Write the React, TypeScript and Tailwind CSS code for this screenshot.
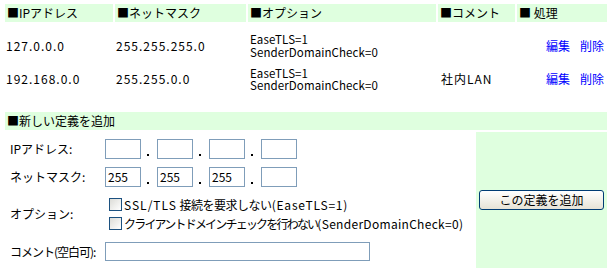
import React from "react";

const IpInputs = ({ values }: { values: string[] }) => (
  <div className="flex items-stretch h-[20px]">
    {values.map((v, i) => (
      <React.Fragment key={i}>
        <div className="w-[36px] h-[20px] border border-[#7f9db9] bg-white flex items-center pl-[2px] text-[12px] leading-none">
          {v}
        </div>
        {i < 3 && (
          <div className="w-[16px] flex items-end pb-[3px]">
            <div className="ml-[6px] w-[2px] h-[2px] bg-black" />
          </div>
        )}
      </React.Fragment>
    ))}
  </div>
);

const Check = ({ children }: { children: React.ReactNode }) => (
  <div className="h-[19px] flex items-center whitespace-nowrap">
    <div className="ml-[4px] shrink-0 w-[13px] h-[13px] border border-[#1c5180] bg-gradient-to-br from-[#dcdcd7] to-white" />
    <span className="ml-[2px] text-[12px] leading-none">{children}</span>
  </div>
);

export default function App() {
  const green = "bg-[#dfffdf]";
  const cols = "grid grid-cols-[108px_131px_188px_77px_90px] gap-x-[2px]";
  return (
    <div
      className="w-[612px] h-[273px] bg-white overflow-hidden text-black"
      style={{ fontFamily: '"Noto Sans CJK JP", "Noto Sans", sans-serif' }}
    >
      <div className="pl-[5px] pt-[4px]">
        <div className={`${cols} h-[18px] text-[12px] leading-none`}>
          {["■IPアドレス", "■ネットマスク", "■オプション", "■コメント", "■ 処理"].map((h) => (
            <div key={h} className={`${green} flex items-center pl-[2px] whitespace-nowrap`}>
              {h}
            </div>
          ))}
        </div>
        {[
          { ip: "127.0.0.0", mask: "255.255.255.0", c: "", h: "h-[33px] mt-[7px]" },
          { ip: "192.168.0.0", mask: "255.255.0.0", c: "社内LAN", h: "h-[34px]" },
        ].map((r) => (
          <div key={r.ip} className={`${cols} ${r.h} text-[12px] leading-none`}>
            <div className="flex items-center pl-[1px] tracking-[1px]">{r.ip}</div>
            <div className="flex items-center pl-[1px] tracking-[1px]">{r.mask}</div>
            <div className="flex flex-col justify-center pl-[2px] text-[11.5px] leading-[12.5px] tracking-[0.1px] whitespace-nowrap">
              <div>EaseTLS=1</div>
              <div>SenderDomainCheck=0</div>
            </div>
            <div className="flex items-center pl-[3px] tracking-[1px]">{r.c}</div>
            <div className="flex items-center justify-end gap-[10px] pr-[3px] text-[#0000ff]">
              <a className="cursor-pointer">編集</a>
              <a className="cursor-pointer">削除</a>
            </div>
          </div>
        ))}
        <div className={`mt-[16px] w-[602px] h-[18px] ${green} flex items-center pl-[2px] text-[12px] leading-none`}>
          ■新しい定義を追加
        </div>
        <div className="mt-[2px] flex gap-[2px] w-[602px]">
          <div className="w-[469px] h-[136px] pl-[5px] pt-[7px] flex flex-col text-[12px] leading-none">
            <div className="flex items-center h-[20px]">
              <div className="w-[95px] shrink-0">IPアドレス:</div>
              <IpInputs values={["", "", "", ""]} />
            </div>
            <div className="flex items-center h-[20px] mt-[8px]">
              <div className="w-[95px] shrink-0">ネットマスク:</div>
              <IpInputs values={["255", "255", "255", ""]} />
            </div>
            <div className="flex items-center mt-[8px]">
              <div className="w-[95px] shrink-0">オプション:</div>
              <div className="flex flex-col">
                <Check>
                  <span className="tracking-[1px]">SSL/TLS</span>{" "}
                  <span className="tracking-[-0.5px]">接続を要求しない</span>
                  <span className="tracking-[0.8px]">(EaseTLS=1)</span>
                </Check>
                <Check>
                  <span className="tracking-[-1.8px]">クライアントドメインチェックを行わない</span>
                  <span className="tracking-[0.3px]">(SenderDomainCheck=0)</span>
                </Check>
              </div>
            </div>
            <div className="flex items-center h-[19px] mt-[9px]">
              <div className="w-[95px] shrink-0 whitespace-nowrap tracking-[-1px]">コメント(空白可):</div>
              <div className="w-[265px] h-[19px] border border-[#7f9db9] bg-white" />
            </div>
          </div>
          <div className={`w-[131px] h-[136px] ${green} flex items-center justify-center`}>
            <button className="w-[125px] h-[20px] rounded-[3px] border border-[#003c74] bg-gradient-to-b from-white to-[#e6e3d6] text-[12px] leading-none flex items-center justify-center">
              この定義を追加
            </button>
          </div>
        </div>
      </div>
    </div>
  );
}
